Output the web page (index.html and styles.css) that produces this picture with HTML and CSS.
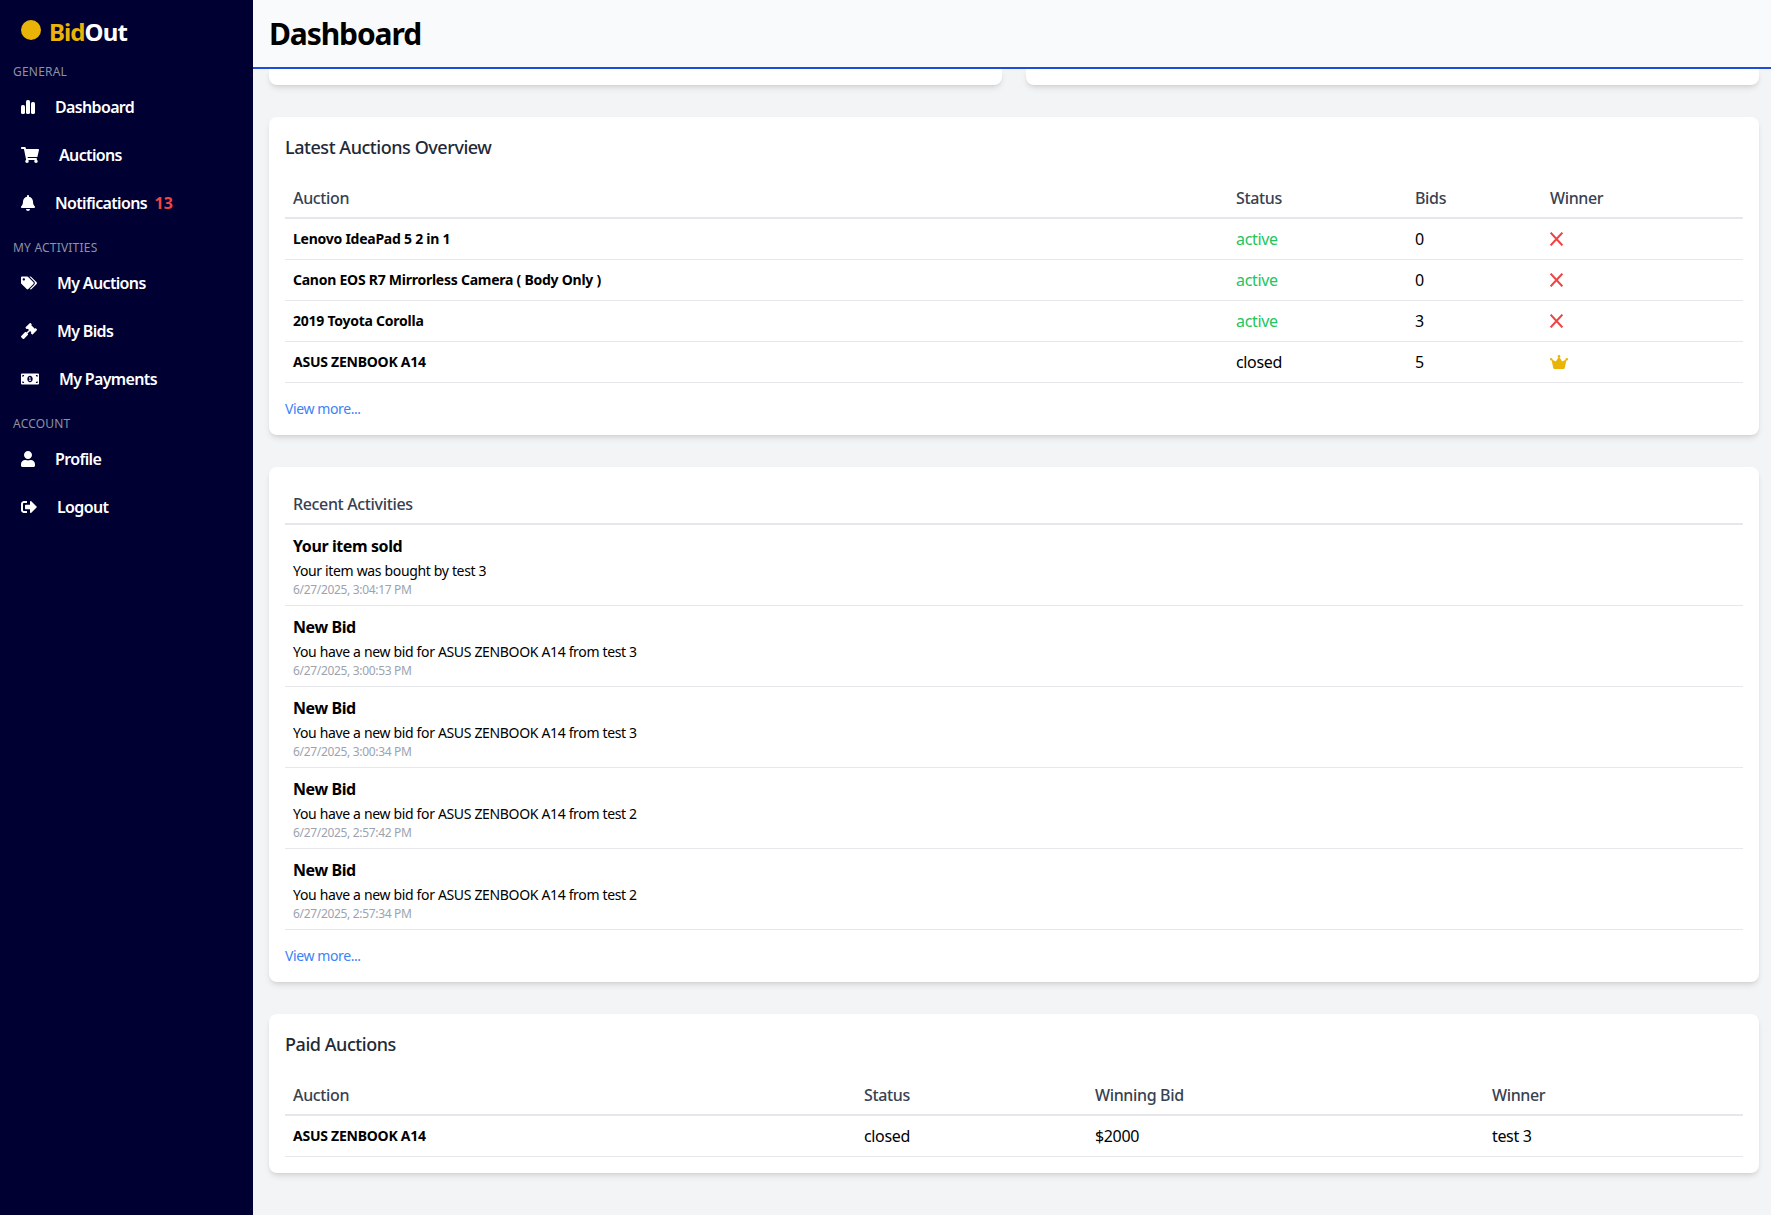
FILE: index.html
```html
<!DOCTYPE html>
<html lang="en">
<head>
    <meta charset="UTF-8">
    <title>BidOut Dashboard</title>
    <link rel="stylesheet" href="styles.css">
</head>
<body>

    <aside class="sidebar">
        <div class="logo">
            <span class="logo-dot"></span>
            <span class="logo-text"><span class="logo-bid">Bid</span>Out</span>
        </div>

        <div class="nav-group">
            <div class="nav-label">GENERAL</div>
            <a class="nav-item" href="#">
                <svg class="icon icon-bars" viewBox="0 0 14 14"><rect x="0" y="5" width="4" height="9" rx="1.6"/><rect x="5" y="0" width="4" height="14" rx="1.6"/><rect x="10" y="2" width="4" height="12" rx="1.6"/></svg>
                <span>Dashboard</span>
            </a>
            <a class="nav-item" href="#">
                <svg class="icon w18" viewBox="0 0 576 512"><path d="M528.12 301.319l47.273-208C578.806 78.301 567.391 64 551.99 64H159.208l-9.166-44.81C147.758 8.021 137.93 0 126.529 0H24C10.745 0 0 10.745 0 24v16c0 13.255 10.745 24 24 24h69.883l70.248 343.435C147.325 417.1 136 435.222 136 456c0 30.928 25.072 56 56 56s56-25.072 56-56c0-15.674-6.447-29.835-16.824-40h209.647C430.447 426.165 424 440.326 424 456c0 30.928 25.072 56 56 56s56-25.072 56-56c0-22.172-12.888-41.332-31.579-50.405l5.517-24.276c3.413-15.018-8.002-29.319-23.403-29.319H218.117l-6.545-32h293.145c11.206 0 20.92-7.754 23.403-18.681z"/></svg>
                <span>Auctions</span>
            </a>
            <a class="nav-item" href="#">
                <svg class="icon w14" viewBox="0 0 448 512"><path d="M224 512c35.32 0 63.97-28.65 63.97-64H160.03c0 35.35 28.65 64 63.97 64zm215.39-149.71c-19.32-20.76-55.47-51.99-55.47-154.29 0-77.7-54.48-139.9-127.94-155.16V32c0-17.67-14.32-32-31.98-32s-31.98 14.33-31.98 32v20.84C118.56 68.1 64.08 130.3 64.08 208c0 102.3-36.15 133.53-55.47 154.29-6 6.45-8.66 14.16-8.61 21.71.11 16.4 12.98 32 32.1 32h383.8c19.12 0 32-15.6 32.1-32 .05-7.55-2.61-15.27-8.61-21.71z"/></svg>
                <span>Notifications <span class="nav-count">13</span></span>
            </a>
        </div>

        <div class="nav-group">
            <div class="nav-label">MY ACTIVITIES</div>
            <a class="nav-item" href="#">
                <svg class="icon w16" viewBox="0 0 640 512"><path d="M497.941 225.941L286.059 14.059A48 48 0 0 0 252.118 0H48C21.49 0 0 21.49 0 48v204.118a48 48 0 0 0 14.059 33.941l211.882 211.882c18.744 18.745 49.136 18.746 67.882 0l204.118-204.118c18.745-18.745 18.745-49.137 0-67.882zM112 160c-26.51 0-48-21.49-48-48s21.49-48 48-48 48 21.49 48 48-21.49 48-48 48zm513.941 133.823L421.823 497.941c-18.745 18.745-49.137 18.745-67.882 0l-.36-.36L527.64 323.522c16.999-16.999 26.36-39.6 26.36-63.64s-9.362-46.641-26.36-63.64L331.397 0h48.721a48 48 0 0 1 33.941 14.059l211.882 211.882c18.745 18.745 18.745 49.137 0 67.882z"/></svg>
                <span>My Auctions</span>
            </a>
            <a class="nav-item" href="#">
                <svg class="icon w16" viewBox="0 0 512 512"><path d="M504.971 199.362l-22.627-22.627c-9.373-9.373-24.569-9.373-33.941 0l-5.657 5.657L329.608 69.255l5.657-5.657c9.373-9.373 9.373-24.569 0-33.941L312.638 7.029c-9.373-9.373-24.569-9.373-33.941 0L154.246 131.48c-9.373 9.373-9.373 24.569 0 33.941l22.627 22.627c9.373 9.373 24.569 9.373 33.941 0l5.657-5.657 39.598 39.598-81.04 81.04-5.657-5.657c-12.497-12.497-32.758-12.497-45.255 0L9.373 412.118c-12.497 12.497-12.497 32.758 0 45.255l45.255 45.255c12.497 12.497 32.758 12.497 45.254 0l114.745-114.745c12.497-12.497 12.497-32.758 0-45.255l-5.657-5.657 81.04-81.04 39.598 39.598-5.657 5.657c-9.373 9.373-9.373 24.569 0 33.941l22.627 22.627c9.373 9.373 24.569 9.373 33.941 0l124.451-124.451c9.372-9.372 9.372-24.568 0-33.941z"/></svg>
                <span>My Bids</span>
            </a>
            <a class="nav-item" href="#">
                <svg class="icon w18" viewBox="0 0 640 512"><path d="M352 288h-16v-88c0-4.42-3.58-8-8-8h-13.58c-4.74 0-9.37 1.4-13.31 4.03l-15.33 10.22a7.978 7.978 0 0 0-2.22 11.09l8.88 13.31a7.978 7.978 0 0 0 11.09 2.22l.47-.31V288h-16c-4.42 0-8 3.58-8 8v16c0 4.42 3.58 8 8 8h64c4.42 0 8-3.58 8-8v-16c0-4.42-3.58-8-8-8zM608 64H32C14.33 64 0 78.33 0 96v320c0 17.67 14.33 32 32 32h576c17.67 0 32-14.33 32-32V96c0-17.67-14.33-32-32-32zM48 400v-64c35.35 0 64 28.65 64 64H48zm0-224v-64h64c0 35.35-28.65 64-64 64zm272 192c-53 0-96-50.15-96-112 0-61.86 43-112 96-112s96 50.14 96 112c0 61.83-43 112-96 112zm272 32h-64c0-35.35 28.65-64 64-64v64zm0-224c-35.35 0-64-28.65-64-64h64v64z"/></svg>
                <span>My Payments</span>
            </a>
        </div>

        <div class="nav-group">
            <div class="nav-label">ACCOUNT</div>
            <a class="nav-item" href="#">
                <svg class="icon w14" viewBox="0 0 448 512"><path d="M224 256c70.7 0 128-57.3 128-128S294.7 0 224 0 96 57.3 96 128s57.3 128 128 128zm89.6 32h-16.7c-22.2 10.2-46.9 16-72.9 16s-50.6-5.8-72.9-16h-16.7C60.2 288 0 348.2 0 422.4V464c0 26.5 21.5 48 48 48h352c26.5 0 48-21.5 48-48v-41.6c0-74.2-60.2-134.4-134.4-134.4z"/></svg>
                <span>Profile</span>
            </a>
            <a class="nav-item" href="#">
                <svg class="icon w16" viewBox="0 0 512 512"><path d="M497 273L329 441c-15 15-41 4.5-41-17v-96H152c-13.3 0-24-10.7-24-24v-96c0-13.3 10.7-24 24-24h136V88c0-21.4 25.9-32 41-17l168 168c9.3 9.4 9.3 24.6 0 34zM192 436v-40c0-6.6-5.4-12-12-12H96c-17.7 0-32-14.3-32-32V160c0-17.7 14.3-32 32-32h84c6.6 0 12-5.4 12-12V76c0-6.6-5.4-12-12-12H96c-53 0-96 43-96 96v192c0 53 43 96 96 96h84c6.6 0 12-5.4 12-12z"/></svg>
                <span>Logout</span>
            </a>
        </div>
    </aside>

    <div class="page">
        <header class="topbar">
            <h1>Dashboard</h1>
        </header>

        <main class="content">
            <!-- Charts row, scrolled out of view -->
            <div class="chart-row">
                <div class="card chart-stub"></div>
                <div class="card chart-stub"></div>
            </div>

            <section class="card">
                <h2 class="card-title">Latest Auctions Overview</h2>
                <table class="data-table latest">
                    <thead>
                        <tr><th>Auction</th><th>Status</th><th>Bids</th><th>Winner</th></tr>
                    </thead>
                    <tbody>
                        <tr>
                            <td class="item-name">Lenovo IdeaPad 5 2 in 1</td>
                            <td class="active">active</td>
                            <td>0</td>
                            <td><svg class="cross" viewBox="0 0 13 14"><path d="M0.6 0.6L12.4 13.4M12.4 0.6L0.6 13.4"/></svg></td>
                        </tr>
                        <tr>
                            <td class="item-name">Canon EOS R7 Mirrorless Camera ( Body Only )</td>
                            <td class="active">active</td>
                            <td>0</td>
                            <td><svg class="cross" viewBox="0 0 13 14"><path d="M0.6 0.6L12.4 13.4M12.4 0.6L0.6 13.4"/></svg></td>
                        </tr>
                        <tr>
                            <td class="item-name">2019 Toyota Corolla</td>
                            <td class="active">active</td>
                            <td>3</td>
                            <td><svg class="cross" viewBox="0 0 13 14"><path d="M0.6 0.6L12.4 13.4M12.4 0.6L0.6 13.4"/></svg></td>
                        </tr>
                        <tr>
                            <td class="item-name">ASUS ZENBOOK A14</td>
                            <td>closed</td>
                            <td>5</td>
                            <td><svg class="crown" viewBox="0 0 18 14"><circle cx="9" cy="1.3" r="1.3"/><circle cx="1.2" cy="4.2" r="1.2"/><circle cx="16.8" cy="4.2" r="1.2"/><path d="M9 1.5L12.2 6.6 16.6 4.2 14.8 12.8Q14.6 14 13.4 14H4.6Q3.4 14 3.2 12.8L1.4 4.2 5.8 6.6Z"/></svg></td>
                        </tr>
                    </tbody>
                </table>
                <a class="view-more" href="#">View more...</a>
            </section>

            <section class="card">
                <h3 class="list-title">Recent Activities</h3>
                <ul class="activity-list">
                    <li>
                        <div class="activity-title">Your item sold</div>
                        <div class="activity-text">Your item was bought by test 3</div>
                        <div class="activity-date">6/27/2025, 3:04:17 PM</div>
                    </li>
                    <li>
                        <div class="activity-title">New Bid</div>
                        <div class="activity-text">You have a new bid for ASUS ZENBOOK A14 from test 3</div>
                        <div class="activity-date">6/27/2025, 3:00:53 PM</div>
                    </li>
                    <li>
                        <div class="activity-title">New Bid</div>
                        <div class="activity-text">You have a new bid for ASUS ZENBOOK A14 from test 3</div>
                        <div class="activity-date">6/27/2025, 3:00:34 PM</div>
                    </li>
                    <li>
                        <div class="activity-title">New Bid</div>
                        <div class="activity-text">You have a new bid for ASUS ZENBOOK A14 from test 2</div>
                        <div class="activity-date">6/27/2025, 2:57:42 PM</div>
                    </li>
                    <li>
                        <div class="activity-title">New Bid</div>
                        <div class="activity-text">You have a new bid for ASUS ZENBOOK A14 from test 2</div>
                        <div class="activity-date">6/27/2025, 2:57:34 PM</div>
                    </li>
                </ul>
                <a class="view-more" href="#">View more...</a>
            </section>

            <section class="card">
                <h2 class="card-title">Paid Auctions</h2>
                <table class="data-table paid">
                    <thead>
                        <tr><th>Auction</th><th>Status</th><th>Winning Bid</th><th>Winner</th></tr>
                    </thead>
                    <tbody>
                        <tr>
                            <td class="item-name">ASUS ZENBOOK A14</td>
                            <td>closed</td>
                            <td>$2000</td>
                            <td>test 3</td>
                        </tr>
                    </tbody>
                </table>
            </section>
        </main>
    </div>

</body>
</html>
```

FILE: styles.css
```css
* {
    box-sizing: border-box;
}

html, body {
    margin: 0;
    padding: 0;
    height: 100%;
}

body {
    display: flex;
    overflow: hidden;
    font-family: "Noto Sans", "Open Sans", sans-serif;
    font-size: 16px;
    line-height: 24px;
    color: #000;
    background: #f3f4f6;
}

/* Sidebar */
.sidebar {
    flex: 0 0 253px;
    background: #000033;
    color: #fff;
}

.logo {
    display: flex;
    align-items: center;
    height: 32px;
    margin: 16px 0 15.5px;
    padding-left: 21px;
}

.logo-dot {
    width: 20px;
    height: 20px;
    margin-right: 8px;
    margin-top: -5px;
    border-radius: 50%;
    background: #eab308;
}

.logo-text {
    font-size: 24px;
    font-weight: 700;
    letter-spacing: -0.9px;
}

.logo-bid {
    color: #eab308;
}

.nav-group {
    margin-bottom: 12px;
}

.nav-label {
    height: 16px;
    margin-bottom: 4px;
    padding-left: 13px;
    font-size: 12px;
    line-height: 16px;
    color: #8a93a3;
    letter-spacing: 0.2px;
}

.nav-item {
    display: flex;
    align-items: center;
    gap: 20px;
    height: 48px;
    padding-left: 21px;
    padding-bottom: 1px;
    color: #fff;
    font-weight: 600;
    letter-spacing: -0.65px;
    text-decoration: none;
}

.icon {
    flex: none;
    height: 16px;
    fill: #fff;
}

.icon-bars { width: 14px; height: 14px; }
.w14 { width: 14px; }
.w16 { width: 16px; }
.w18 { width: 18px; }

.nav-count {
    margin-left: 4px;
    color: #ef4444;
    font-weight: 700;
    letter-spacing: 0;
}

/* Main column */
.page {
    flex: 1;
    min-width: 0;
    display: flex;
    flex-direction: column;
}

.topbar {
    flex: none;
    height: 69px;
    padding: 0 15px 0 16px;
    background: #f9fafb;
    border-bottom: 2px solid #1d4ed8;
}

.topbar h1 {
    margin: 0;
    font-size: 30px;
    line-height: 67px;
    font-weight: 700;
    letter-spacing: -1.1px;
}

.content {
    flex: 1;
    overflow: hidden;
    padding: 0 12px 0 16px;
}

.card {
    margin-bottom: 32px;
    padding: 16px;
    background: #fff;
    border-radius: 8px;
    box-shadow: 0 4px 6px -1px rgba(0, 0, 0, 0.1), 0 2px 4px -2px rgba(0, 0, 0, 0.1);
}

.chart-row {
    display: grid;
    grid-template-columns: 1fr 1fr;
    gap: 24px;
    margin-bottom: 32px;
}

.chart-stub {
    height: 16px;
    margin: 0;
    padding: 0;
    border-radius: 0 0 8px 8px;
}

.card-title {
    margin: 0 0 16px;
    font-size: 18px;
    line-height: 28px;
    font-weight: 500;
    color: #1f2937;
    letter-spacing: -0.45px;
}

/* Tables */
.data-table {
    width: 100%;
    table-layout: fixed;
    border-collapse: collapse;
}

.data-table th {
    padding: 9px 8px 7px;
    text-align: left;
    font-weight: 500;
    color: #374151;
    letter-spacing: -0.35px;
    border-bottom: 2px solid #e5e7eb;
}

.data-table td {
    padding: 8px;
    height: 41px;
    letter-spacing: -0.35px;
    border-bottom: 1px solid #e5e7eb;
}

.latest th:nth-child(1) { width: 943px; }
.latest th:nth-child(2) { width: 179px; }
.latest th:nth-child(3) { width: 135px; }

.paid th:nth-child(1) { width: 571px; }
.paid th:nth-child(2) { width: 231px; }
.paid th:nth-child(3) { width: 397px; }

.data-table .item-name {
    font-size: 14px;
    font-weight: 700;
    letter-spacing: -0.25px;
}

.data-table .active {
    color: #22c55e;
}

.cross {
    display: block;
    width: 13px;
    height: 14px;
    fill: none;
    stroke: #ef4444;
    stroke-width: 2;
}

.crown {
    display: block;
    width: 18px;
    height: 14px;
    fill: #eab308;
}

.view-more {
    display: block;
    margin-top: 16px;
    font-size: 14px;
    line-height: 20px;
    color: #3b82f6;
    text-decoration: none;
    letter-spacing: -0.4px;
}

/* Recent activities */
.list-title {
    margin: 0;
    padding: 9px 8px 7px;
    font-size: 16px;
    line-height: 24px;
    font-weight: 500;
    color: #374151;
    letter-spacing: -0.35px;
    border-bottom: 2px solid #e5e7eb;
}

.activity-list {
    margin: 0;
    padding: 0;
    list-style: none;
}

.activity-list li {
    padding: 8px;
    border-bottom: 1px solid #e5e7eb;
}

.activity-title {
    padding-top: 1px;
    margin-bottom: -1px;
    font-weight: 700;
    letter-spacing: -0.4px;
}

.activity-text {
    margin-top: 4px;
    font-size: 14px;
    line-height: 20px;
    letter-spacing: -0.34px;
}

.activity-date {
    font-size: 12px;
    line-height: 16px;
    color: #9ca3af;
    letter-spacing: -0.32px;
    padding-top: 1px;
    margin-bottom: -1px;
}
```
